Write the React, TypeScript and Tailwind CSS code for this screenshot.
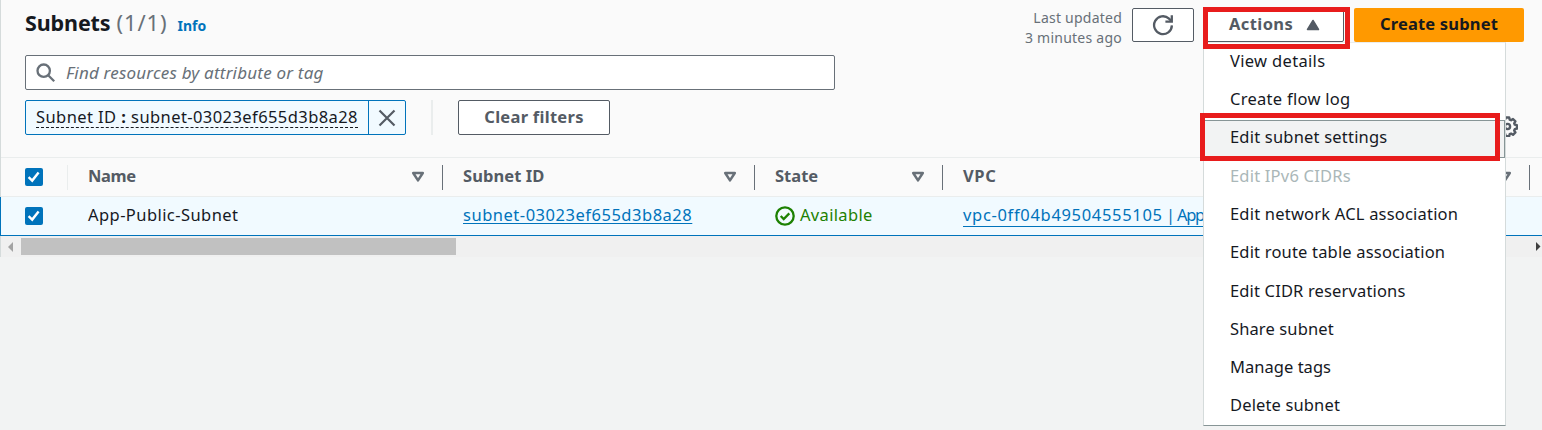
import React from "react";

const menuItems = [
  { label: "View details", sp: "tracking-[0.33px]" },
  { label: "Create flow log", sp: "tracking-[0.28px]" },
  { label: "Edit subnet settings", sp: "tracking-[0.2px]", active: true },
  { label: "Edit IPv6 CIDRs", sp: "tracking-[0.2px]", disabled: true },
  { label: "Edit network ACL association", sp: "tracking-[0.2px]" },
  { label: "Edit route table association", sp: "tracking-[0.18px]" },
  { label: "Edit CIDR reservations", sp: "tracking-[0.15px]" },
  { label: "Share subnet", sp: "tracking-[0.12px]" },
  { label: "Manage tags", sp: "tracking-[0.03px]" },
  { label: "Delete subnet", sp: "tracking-[0.14px]" },
];

function Checkbox() {
  return (
    <svg width="18" height="18" viewBox="0 0 18 18" className="block shrink-0">
      <rect width="18" height="18" rx="2" fill="#0073bb" />
      <path d="M3.6 9.2 7.2 12.6 13.6 4.4" fill="none" stroke="#fff" strokeWidth="2.4" />
    </svg>
  );
}

function SortIcon() {
  return (
    <svg width="14" height="12" viewBox="0 0 14 12" className="block shrink-0">
      <path d="M2.2 2h9.6L7 9.4z" fill="none" stroke="#687078" strokeWidth="2.5" strokeLinejoin="round" />
    </svg>
  );
}

function Divider() {
  return <div className="h-[25px] w-px shrink-0 bg-[#687078]" />;
}

export default function App() {
  return (
    <div className="relative h-[430px] w-[1542px] overflow-hidden bg-[#f2f3f3] font-['Noto_Sans',sans-serif] text-[16.5px] whitespace-nowrap text-[#16191f]">
      <div className="h-[236px] border-l border-[#d5dbdb] bg-[#fafafa]">
        <div className="flex h-[55px] items-start pt-[7px] pr-[18px] pl-[24px]">
          <h1 className="flex items-baseline text-[22px] leading-[30px]">
            <span className="text-[21.5px] font-bold tracking-[-0.12px]">Subnets</span>
            <span className="ml-[6px] tracking-[0.9px] text-[#687078]">(1/1)</span>
            <span className="ml-[10px] text-[14px] font-bold text-[#0073bb]">Info</span>
          </h1>
          <div className="mt-px ml-auto flex items-start">
            <div className="mr-[10px] text-right text-[14px] leading-[20px] text-[#687078]">
              <div className="tracking-[0.23px]">Last updated</div>
              <div className="tracking-[0.24px]">3 minutes ago</div>
            </div>
            <button className="flex h-[34px] w-[62px] items-center justify-center rounded-[2px] border border-[#545b64] bg-white">
              <svg width="22" height="22" viewBox="0 0 22 22" fill="none" stroke="#545b64" strokeWidth="2.3">
                <path d="M19.9 11.4A8.9 8.9 0 1 1 17 4.6L19.4 7" />
                <path d="M19.8 1.2v6.4h-6.4" />
              </svg>
            </button>
            <button className="ml-[10px] flex h-[34px] w-[140px] items-center rounded-[2px] border border-[#545b64] bg-white pb-px pl-[24px] font-bold text-[#545b64]">
              <span className="w-[64px] text-left tracking-[0.4px]">Actions</span>
              <svg width="14" height="12" viewBox="0 0 14 12" className="ml-[13px]">
                <path d="M7 1.5 12.5 10.5h-11z" fill="#545b64" stroke="#545b64" strokeWidth="1.5" strokeLinejoin="round" />
              </svg>
            </button>
            <button className="ml-[10px] flex h-[34px] w-[170px] items-center justify-center rounded-[2px] bg-[#ff9900] pb-[2px] font-bold tracking-[0.17px]">
              Create subnet
            </button>
          </div>
        </div>
        <div className="ml-[24px] flex h-[35px] w-[810px] items-center rounded-[2px] border border-[#687078] bg-white pl-[10px] text-[#687078]">
          <svg width="20" height="20" viewBox="0 0 20 20" fill="none" stroke="#687078" strokeWidth="2.3">
            <circle cx="7.7" cy="7.7" r="6.2" />
            <path d="m12.2 12.2 6 6" />
          </svg>
          <span className="ml-[10px] pt-px text-[17px] tracking-[0.2px] italic">Find resources by attribute or tag</span>
        </div>
        <div className="mt-[10px] ml-[24px] flex h-[35px]">
          <div className="flex w-[381px] rounded-[2px] border border-[#0073bb] bg-[#f1faff]">
            <div className="flex w-[343px] items-center border-r border-[#0073bb] pl-[10px]">
              <span className="border-b border-dashed border-[#16191f] leading-[20px] tracking-[0.42px]">
                Subnet ID <b>:</b> subnet-03023ef655d3b8a28
              </span>
            </div>
            <div className="flex flex-1 items-center justify-center">
              <svg width="18" height="18" viewBox="0 0 18 18" stroke="#545b64" strokeWidth="2.2">
                <path d="m1.500 1.500 15 15M16.500 1.500l-15 15" />
              </svg>
            </div>
          </div>
          <div className="ml-[25px] w-[2px] bg-[#eaeded]" />
          <button className="ml-[25px] flex w-[152px] items-center justify-center rounded-[2px] border border-[#545b64] bg-white font-bold tracking-[0.28px] text-[#545b64]">
            Clear filters
          </button>
          <div className="mt-[16px] ml-auto flex h-[21px] items-center pr-[24px]">
            <svg width="21" height="21" viewBox="0 0 21 21" fill="none" stroke="#545b64" strokeWidth="2.4">
              <circle cx="10.5" cy="10.5" r="2.6" />
              <path
                strokeLinejoin="round"
                d="M8.8 1.5h3.4l.5 2.1 1.4.6 1.9-1.2 2.4 2.4-1.2 1.9.6 1.4 2.1.5v3.4l-2.1.5-.6 1.4 1.2 1.9-2.4 2.4-1.9-1.2-1.4.6-.5 2.1H8.8l-.5-2.1-1.4-.6L5 18.3l-2.4-2.4L3.8 14l-.6-1.4L1.1 12.1V8.7l2.1-.5.6-1.4L2.6 4.9 5 2.5l1.9 1.2 1.4-.6z"
              />
            </svg>
          </div>
        </div>
        <div className="mt-[22px] flex h-[40px] items-center border-y border-[#eaeded] pl-[24px] font-bold text-[#545b64]">
          <Checkbox />
          <div className="ml-[24px] h-[25px] w-px bg-[#eaeded]" />
          <div className="ml-[20px] flex w-[354px] items-center justify-between pr-[17px]">
            <span className="pb-[2px] tracking-[-0.4px]">Name</span>
            <SortIcon />
          </div>
          <Divider />
          <div className="ml-[20px] flex w-[291px] items-center justify-between pr-[17px]">
            <span className="pb-[2px] tracking-[0.08px]">Subnet ID</span>
            <SortIcon />
          </div>
          <Divider />
          <div className="ml-[20px] flex w-[167px] items-center justify-between pr-[17px]">
            <span className="pb-[2px]">State</span>
            <SortIcon />
          </div>
          <Divider />
          <div className="ml-[20px] flex w-[566px] items-center justify-between pr-[17px]">
            <span className="pb-[2px] tracking-[0.6px]">VPC</span>
            <SortIcon />
          </div>
          <Divider />
        </div>
      </div>
      <div className="relative -mt-[39px] flex h-[39px] items-center border-b border-l border-[#0073bb] bg-[#f1faff] pl-[24px]">
        <Checkbox />
        <div className="ml-[45px] w-[375px] pb-[2px] tracking-[0.43px]">App-Public-Subnet</div>
        <div className="w-[312px] pb-[2px]">
          <a className="tracking-[0.52px] text-[#0073bb] underline decoration-1 underline-offset-[2px]">subnet-03023ef655d3b8a28</a>
        </div>
        <div className="flex w-[188px] items-center text-[#1d8102]">
          <svg width="20" height="20" viewBox="0 0 20 20" fill="none" stroke="#1d8102" strokeWidth="2.3">
            <circle cx="10" cy="10" r="8.7" />
            <path d="m5.7 10 3 3 5.6-5.6" />
          </svg>
          <span className="ml-[5px] pb-[2px] tracking-[0.33px]">Available</span>
        </div>
        <a className="flex w-[241px] border-b border-[#0073bb] pb-px leading-[20px] text-[#0073bb]">
          <span className="w-[203px] tracking-[0.68px]">vpc-0ff04b49504555105</span>
          <span className="w-[11px]">|</span>
          <span className="tracking-[-1.4px]">App</span>
        </a>
      </div>
      <div className="flex h-[21px] items-center justify-between border-l border-[#d5dbdb] bg-[#f0f0f0]">
        <svg width="20" height="17" viewBox="0 0 20 17">
          <path d="M7 9 12 4v10z" fill="#a3a3a3" />
        </svg>
        <div className="h-[17px] w-[435px] bg-[#c1c1c1]" />
        <svg width="8" height="17" viewBox="0 0 8 17" className="ml-auto">
          <path d="M2 4v9l4.500-4.500z" fill="#404040" />
        </svg>
      </div>

      <div className="absolute top-[42px] left-[1203px] h-[384px] w-[303px] border border-t-[#eaeded] border-r-[#d5dbdb] border-b-[#879596] border-l-[#d5dbdb] bg-white">
        {menuItems.map((item) => (
          <div
            key={item.label}
            className={
              "flex h-[38.3px] items-center pb-[2px] pl-[26px] " +
              (item.active ? "border-y border-r border-[#879596] bg-[#f2f3f3] " : "") +
              (item.disabled ? "text-[#aab7b8]" : "")
            }
          >
            <span className={item.sp}>{item.label}</span>
          </div>
        ))}
      </div>
      <div className="absolute top-[7px] left-[1203px] h-[42px] w-[147px] border-[5px] border-[#e81c1c]" />
      <div className="absolute top-[113px] left-[1200px] h-[48px] w-[300px] border-[5px] border-[#e81c1c]" />
    </div>
  );
}
